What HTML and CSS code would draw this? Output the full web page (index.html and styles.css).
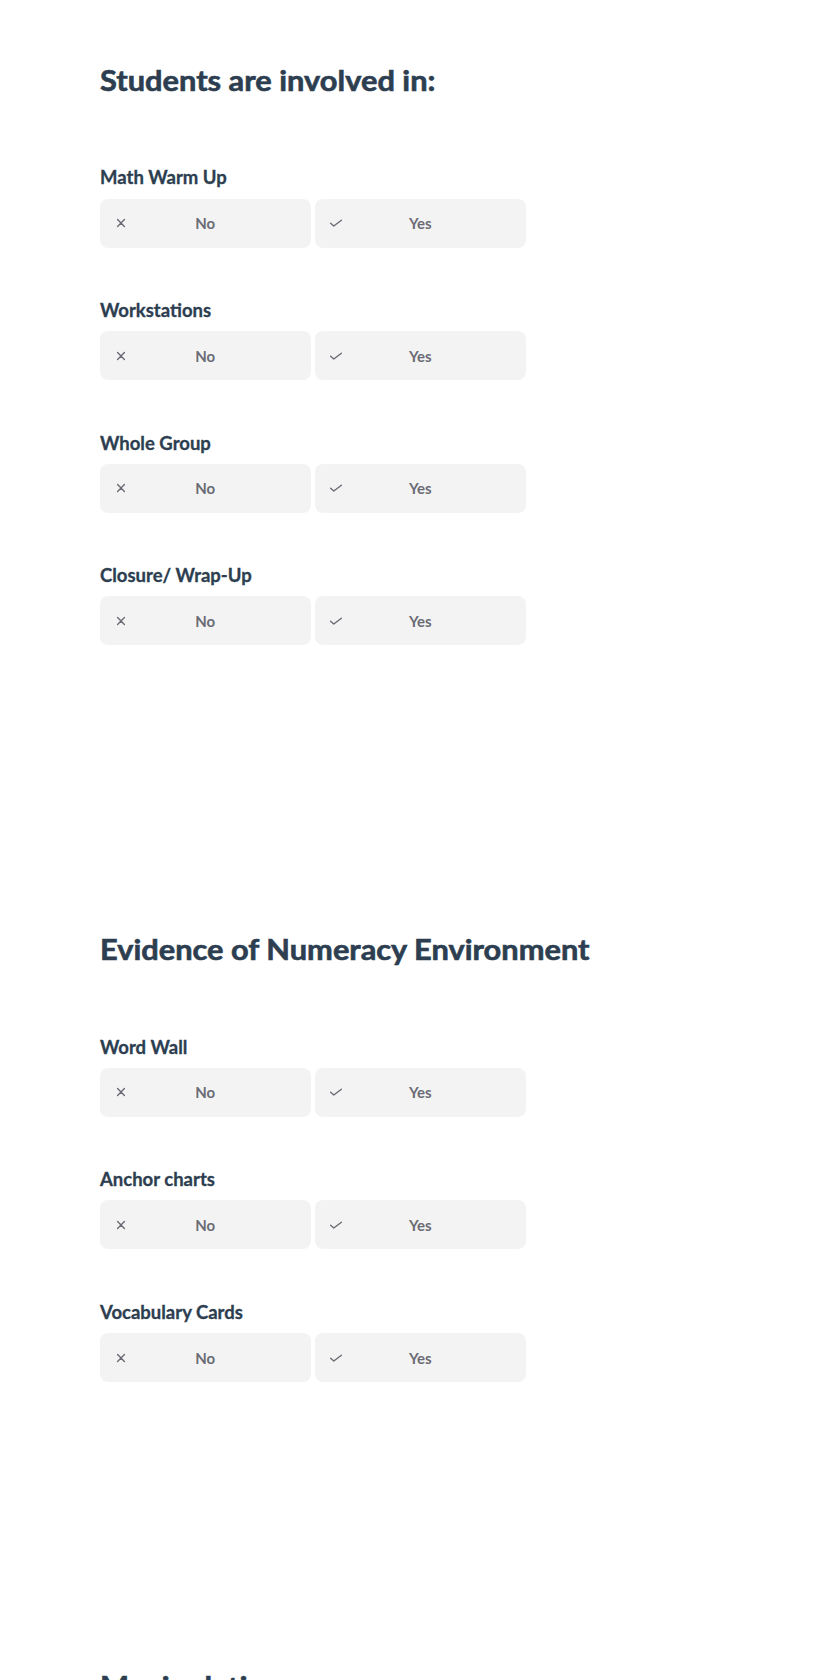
FILE: index.html
```html
<!DOCTYPE html>
<html lang="en">
<head>
<meta charset="utf-8">
<title>Observation</title>
<link rel="stylesheet" href="styles.css">
</head>
<body>
<main class="page">
  <section class="section">
    <h2 class="section-title">Students are involved in:</h2>
    <div class="question">
      <div class="q-label">Math Warm Up</div>
      <div class="choices">
        <button class="choice"><svg class="icon" viewBox="0 0 16 16"><path d="M4.6 4.6 L11.4 11.4 M11.4 4.6 L4.6 11.4"/></svg><span>No</span></button>
        <button class="choice"><svg class="icon" viewBox="0 0 16 16"><path d="M2.6 8.3 L5.8 11 L13.4 5.2"/></svg><span>Yes</span></button>
      </div>
    </div>
    <div class="question">
      <div class="q-label">Workstations</div>
      <div class="choices">
        <button class="choice"><svg class="icon" viewBox="0 0 16 16"><path d="M4.6 4.6 L11.4 11.4 M11.4 4.6 L4.6 11.4"/></svg><span>No</span></button>
        <button class="choice"><svg class="icon" viewBox="0 0 16 16"><path d="M2.6 8.3 L5.8 11 L13.4 5.2"/></svg><span>Yes</span></button>
      </div>
    </div>
    <div class="question">
      <div class="q-label">Whole Group</div>
      <div class="choices">
        <button class="choice"><svg class="icon" viewBox="0 0 16 16"><path d="M4.6 4.6 L11.4 11.4 M11.4 4.6 L4.6 11.4"/></svg><span>No</span></button>
        <button class="choice"><svg class="icon" viewBox="0 0 16 16"><path d="M2.6 8.3 L5.8 11 L13.4 5.2"/></svg><span>Yes</span></button>
      </div>
    </div>
    <div class="question">
      <div class="q-label">Closure/ Wrap-Up</div>
      <div class="choices">
        <button class="choice"><svg class="icon" viewBox="0 0 16 16"><path d="M4.6 4.6 L11.4 11.4 M11.4 4.6 L4.6 11.4"/></svg><span>No</span></button>
        <button class="choice"><svg class="icon" viewBox="0 0 16 16"><path d="M2.6 8.3 L5.8 11 L13.4 5.2"/></svg><span>Yes</span></button>
      </div>
    </div>
  </section>

  <section class="section">
    <h2 class="section-title">Evidence of Numeracy Environment</h2>
    <div class="question">
      <div class="q-label">Word Wall</div>
      <div class="choices">
        <button class="choice"><svg class="icon" viewBox="0 0 16 16"><path d="M4.6 4.6 L11.4 11.4 M11.4 4.6 L4.6 11.4"/></svg><span>No</span></button>
        <button class="choice"><svg class="icon" viewBox="0 0 16 16"><path d="M2.6 8.3 L5.8 11 L13.4 5.2"/></svg><span>Yes</span></button>
      </div>
    </div>
    <div class="question">
      <div class="q-label">Anchor charts</div>
      <div class="choices">
        <button class="choice"><svg class="icon" viewBox="0 0 16 16"><path d="M4.6 4.6 L11.4 11.4 M11.4 4.6 L4.6 11.4"/></svg><span>No</span></button>
        <button class="choice"><svg class="icon" viewBox="0 0 16 16"><path d="M2.6 8.3 L5.8 11 L13.4 5.2"/></svg><span>Yes</span></button>
      </div>
    </div>
    <div class="question">
      <div class="q-label">Vocabulary Cards</div>
      <div class="choices">
        <button class="choice"><svg class="icon" viewBox="0 0 16 16"><path d="M4.6 4.6 L11.4 11.4 M11.4 4.6 L4.6 11.4"/></svg><span>No</span></button>
        <button class="choice"><svg class="icon" viewBox="0 0 16 16"><path d="M2.6 8.3 L5.8 11 L13.4 5.2"/></svg><span>Yes</span></button>
      </div>
    </div>
  </section>

  <section class="section">
    <h2 class="section-title">Manipulatives</h2>
  </section>
</main>
</body>
</html>
```
FILE: styles.css
```css
html, body {
  margin: 0;
  padding: 0;
  background: #ffffff;
}
body {
  font-family: Lato, "Open Sans", "Liberation Sans", sans-serif;
  color: #2c3e50;
}
.page {
  padding: 64px 0 0 100px;
}
.section {
  display: flex;
  flex-direction: column;
  align-items: flex-start;
  margin-bottom: 288px;
}
.section-title {
  margin: 0 0 68.8px 0;
  font-size: 28px;
  line-height: 1.2;
  font-weight: 700;
  color: #2c3e50;
  -webkit-text-stroke: 0.6px #2c3e50;
  transform: scaleX(1.1);
  transform-origin: left center;
}
.question {
  display: flex;
  flex-direction: column;
  gap: 10px;
}
.question + .question {
  margin-top: 51.4px;
}
.q-label {
  font-size: 18.5px;
  line-height: 1.2;
  font-weight: 700;
  color: #2c3e50;
  -webkit-text-stroke: 0.3px #2c3e50;
}
.choices {
  display: grid;
  grid-template-columns: 210.5px 210.5px;
  gap: 4.5px;
}
.choice {
  position: relative;
  height: 49px;
  border: 0;
  border-radius: 8px;
  background: #f3f3f3;
  font-family: Lato, "Open Sans", "Liberation Sans", sans-serif;
  font-size: 15px;
  font-weight: 700;
  color: #6b6b75;
  display: flex;
  align-items: center;
  justify-content: center;
  padding: 0;
}
.icon {
  position: absolute;
  left: 12.5px;
  top: 50%;
  width: 16px;
  height: 16px;
  margin-top: -8px;
  fill: none;
  stroke: #6b6b75;
  stroke-width: 1.4;
  stroke-linecap: round;
  stroke-linejoin: round;
}
```
